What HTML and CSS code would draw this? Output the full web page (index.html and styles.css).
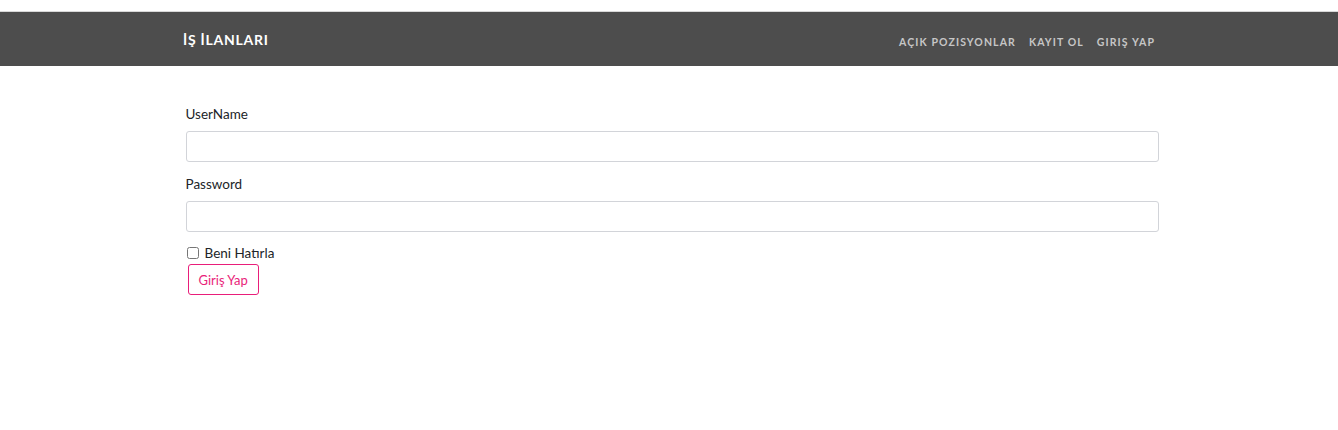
FILE: index.html
```html
<!DOCTYPE html>
<html lang="tr">
<head>
<meta charset="utf-8">
<title>İş İlanları</title>
<link rel="stylesheet" href="styles.css">
</head>
<body>
<div class="topstrip"></div>
<nav class="navbar">
  <div class="nav-inner">
    <a class="brand" href="#">İŞ İLANLARI</a>
    <ul class="nav-links">
      <li><a href="#">AÇIK POZISYONLAR</a></li>
      <li><a href="#">KAYIT OL</a></li>
      <li><a href="#">GIRIŞ YAP</a></li>
    </ul>
  </div>
</nav>
<main class="content">
  <form class="login-form">
    <div class="field">
      <label for="u">UserName</label>
      <input id="u" type="text">
    </div>
    <div class="field">
      <label for="p">Password</label>
      <input id="p" type="password">
    </div>
    <label class="remember"><input type="checkbox"><span>Beni Hatırla</span></label>
    <button type="button" class="btn">Giriş Yap</button>
  </form>
</main>
</body>
</html>
```
FILE: styles.css
```css
* { box-sizing: border-box; }
html, body { margin: 0; padding: 0; background: #fff; }
body { font-family: Lato, "Open Sans", sans-serif; color: #222; }
.topstrip { height: 12px; background: #fff; border-bottom: 1px solid #d8d8d8; }
.navbar { background: #4d4d4d; height: 54px; }
.nav-inner {
  width: 972px; margin: 0 auto; height: 100%;
  display: flex; align-items: center; justify-content: space-between;
}
.brand {
  color: #fff; text-decoration: none; font-weight: 700;
  font-size: 14px; letter-spacing: 0.75px;
}
.nav-links { list-style: none; margin: 0; padding: 0; display: flex; gap: 13px; }
.nav-links a {
  color: #c6c6c6; text-decoration: none; font-weight: 700;
  font-size: 10.5px; letter-spacing: 1.1px;
}
.content { width: 973px; margin: 0 auto; padding-top: 39px; position: relative; left: 3px; }
.login-form { display: flex; flex-direction: column; align-items: flex-start; }
.field { width: 100%; display: flex; flex-direction: column; margin-bottom: 13px; }
.field label { font-size: 13.5px; color: #212529; margin-bottom: 8px; line-height: 18px; }
.field input {
  width: 100%; height: 31px; border: 1px solid #d2d4d9; border-radius: 3px;
  font: inherit; padding: 4px 8px;
}
.remember {
  display: flex; align-items: center; gap: 6px; font-size: 13.5px; color: #212529;
}
.remember input { margin: 0 0 0 1px; width: 12px; height: 12px; }
.btn {
  margin: 3px 0 0 2px; height: 31px; padding: 0 10px;
  border: 1px solid #e91e7a; border-radius: 3px; background: #fff;
  color: #e91e7a; font-family: Lato, sans-serif; font-size: 13px;
}
```
